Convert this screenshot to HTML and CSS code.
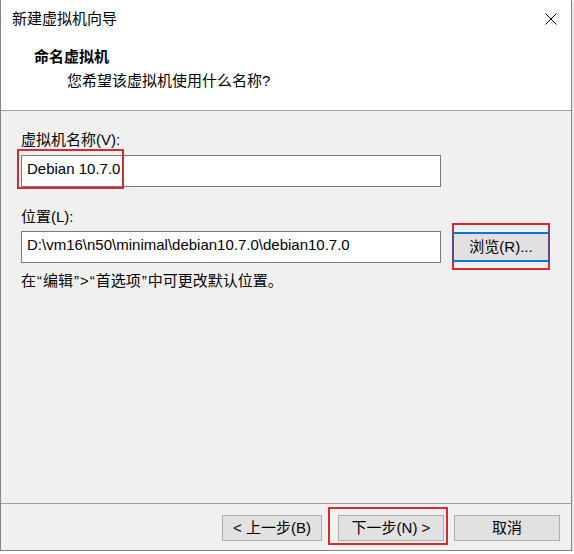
FILE: index.html
```html
<!DOCTYPE html>
<html lang="zh-CN">
<head>
<meta charset="utf-8">
<title>新建虚拟机向导</title>
<link rel="stylesheet" href="styles.css">
</head>
<body>
<div class="window">
  <div class="titlebar">
    <span class="title">新建虚拟机向导</span>
    <svg class="close" width="12" height="12" viewBox="0 0 12 12"><path d="M0.5 0.5 L11.5 11.5 M11.5 0.5 L0.5 11.5" stroke="#000" stroke-width="1" fill="none"/></svg>
  </div>
  <div class="header">
    <div class="h-title">命名虚拟机</div>
    <div class="h-sub">您希望该虚拟机使用什么名称?</div>
  </div>
  <div class="content">
    <div class="label">虚拟机名称(V):</div>
    <div class="field name-field">Debian 10.7.0</div>
    <div class="label label-loc">位置(L):</div>
    <div class="row">
      <div class="field">D:\vm16\n50\minimal\debian10.7.0\debian10.7.0</div>
      <div class="browse">浏览(R)...</div>
    </div>
    <div class="hint">在<span class="q">“</span>编辑<span class="q">”</span>&gt;<span class="q">“</span>首选项<span class="q">”</span>中可更改默认位置。</div>
  </div>
  <div class="footer">
    <div class="btn btn-back">&lt; 上一步(B)</div>
    <div class="btn btn-next">下一步(N) &gt;</div>
    <div class="btn btn-cancel">取消</div>
  </div>
  <div class="mark mark-name"></div>
  <div class="mark mark-browse"></div>
  <div class="mark mark-next"></div>
</div>
</body>
</html>
```

FILE: styles.css
```css
html, body {
  margin: 0;
  padding: 0;
  background: #ffffff;
}
body {
  font-family: "Liberation Sans", "Noto Sans CJK SC", sans-serif;
  font-size: 15px;
  color: #000;
}
.window {
  position: relative;
  width: 572px;
  height: 551px;
  box-sizing: border-box;
  border: 1px solid #858585;
  border-top: none;
  background: #f0f0f0;
  display: flex;
  flex-direction: column;
  box-shadow: 1px 1px 3px rgba(0,0,0,0.18);
}
.titlebar {
  height: 40px;
  background: #fff;
  display: flex;
  align-items: center;
  justify-content: space-between;
  padding: 0 14px 2px 11px;
  box-sizing: border-box;
  line-height: 20px;
}
.close {
  display: block;
}
.header {
  height: 71px;
  box-sizing: border-box;
  background: #fff;
  border-bottom: 1px solid #a0a0a0;
  padding: 7px 0 0 33px;
  line-height: 20px;
}
.h-title {
  font-weight: bold;
}
.h-sub {
  margin-top: 4px;
  padding-left: 33px;
}
.content {
  flex: 1;
  padding: 19px 0 0 20px;
  line-height: 20px;
}
.label-loc {
  margin-top: 20px;
}
.field {
  width: 420px;
  height: 32px;
  box-sizing: border-box;
  border: 1px solid #7a7a7a;
  background: #fff;
  padding-left: 5px;
  line-height: 26px;
  white-space: nowrap;
  overflow: hidden;
}
.name-field {
  margin-top: 5px;
}
.row {
  margin-top: 4px;
  display: flex;
  align-items: center;
  gap: 11px;
}
.browse {
  position: relative;
  z-index: 2;
  width: 98px;
  height: 30px;
  box-sizing: border-box;
  background: #e1e1e1;
  border: 2px solid #0078d7;
  border-left-color: #6b4384;
  border-right-color: #6b4384;
  display: flex;
  align-items: center;
  justify-content: center;
  line-height: 20px;
}
.hint {
  margin-top: 8px;
}
.q {
  padding: 0 1px;
}
.footer {
  height: 47px;
  box-sizing: border-box;
  border-top: 1px solid #a0a0a0;
  padding: 11px 11px 0 0;
  display: flex;
  justify-content: flex-end;
  align-items: flex-start;
}
.btn {
  height: 26px;
  box-sizing: border-box;
  background: #e1e1e1;
  border: 1px solid #adadad;
  display: flex;
  align-items: center;
  justify-content: center;
  line-height: 20px;
}
.btn-back {
  width: 100px;
  margin-right: 16px;
}
.btn-next {
  width: 106px;
  margin-right: 10px;
}
.btn-cancel {
  width: 106px;
}
.mark {
  position: absolute;
  border: 2px solid #d42a33;
  box-sizing: border-box;
  z-index: 1;
}
.mark-name {
  left: 16px;
  top: 149px;
  width: 107px;
  height: 40px;
}
.mark-browse {
  left: 451px;
  top: 223px;
  width: 98px;
  height: 47px;
}
.mark-next {
  left: 327px;
  top: 507px;
  width: 120px;
  height: 38px;
}
```
